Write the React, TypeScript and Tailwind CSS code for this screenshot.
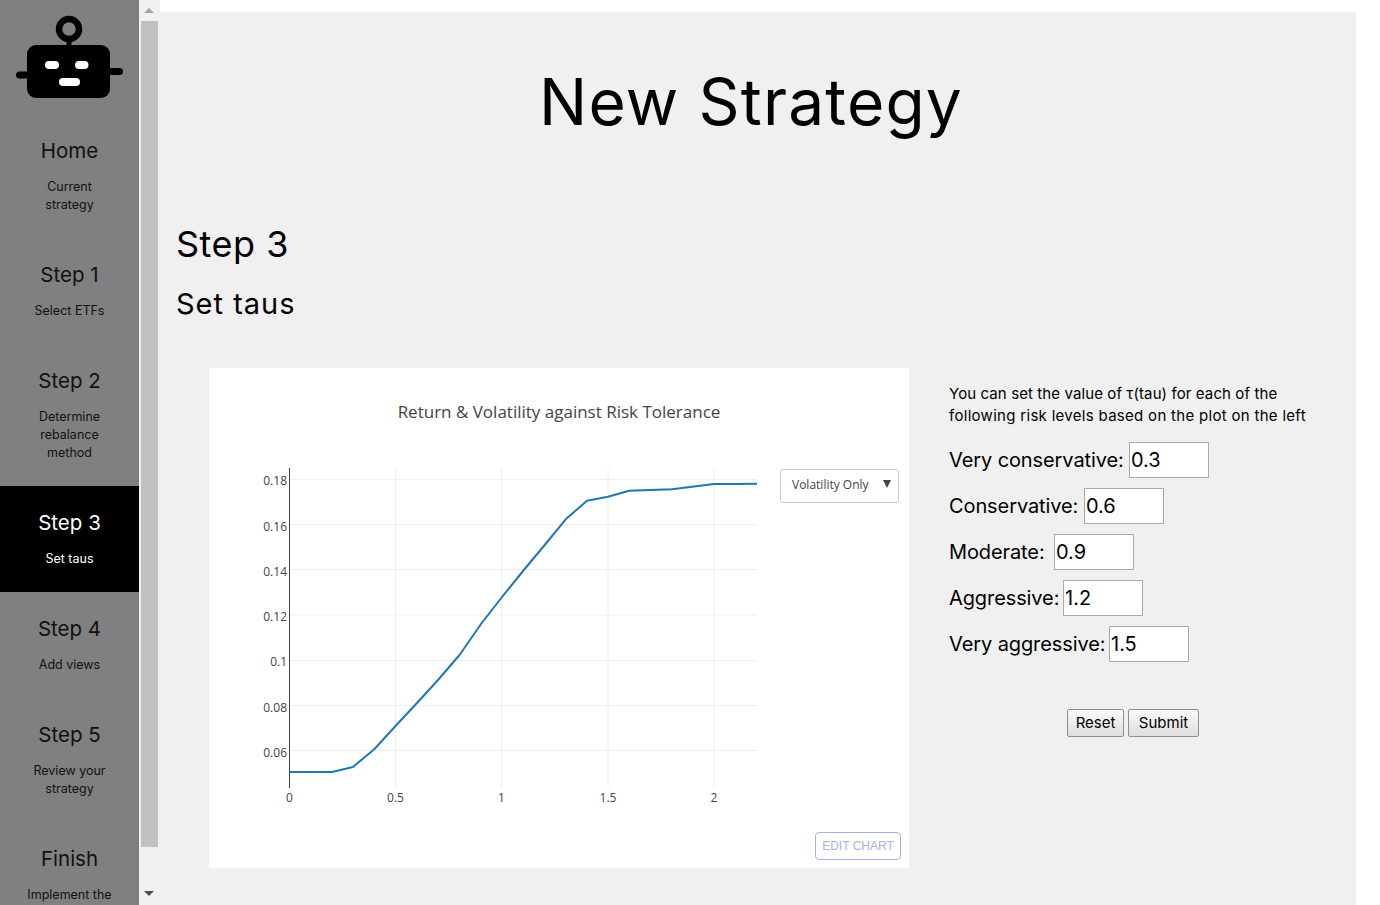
import React from "react";

const items = [
  { t: "Home", s: ["Current", "strategy"] },
  { t: "Step 1", s: ["Select ETFs"] },
  { t: "Step 2", s: ["Determine", "rebalance", "method"] },
  { t: "Step 3", s: ["Set taus"], active: true },
  { t: "Step 4", s: ["Add views"] },
  { t: "Step 5", s: ["Review your", "strategy"] },
  { t: "Finish", s: ["Implement the", "strategy"] },
];

const fields = [
  ["Very conservative:", "0.3", "w-[175px]"],
  ["Conservative:", "0.6", "w-[130px]"],
  ["Moderate:", "0.9", "w-[100px]"],
  ["Aggressive:", "1.2", "w-[109px]"],
  ["Very aggressive:", "1.5", "w-[155px]"],
];

const xTicks: [number, string][] = [
  [289.5, "0"],
  [395.5, "0.5"],
  [501.5, "1"],
  [608, "1.5"],
  [714, "2"],
];
const yTicks: [number, string, number][] = [
  [479.5, "0.18", 485],
  [524.5, "0.16", 531],
  [569.5, "0.14", 576],
  [615, "0.12", 621],
  [660.5, "0.1", 666],
  [705.5, "0.08", 712],
  [750.5, "0.06", 757],
];
const line =
  "289.5,772 332,772 353,767 374.5,749 395.5,726 417,703 438,680 459.5,655 481,624 502,597 523,571 544.7,545 565.7,519.3 587,500.7 608,496.7 629,490.7 672,489.3 714,484 735,484 757,483.7";

function Logo() {
  return (
    <svg width="139" height="114" viewBox="0 0 139 114" className="block">
      <circle cx="69" cy="29" r="10" fill="none" stroke="#000" strokeWidth="6.5" />
      <rect x="66.5" y="40" width="5" height="7" fill="#000" />
      <rect x="27" y="45" width="83" height="53" rx="9" fill="#000" />
      <rect x="16" y="71.5" width="14" height="7" rx="3.5" fill="#000" />
      <rect x="108" y="68" width="15" height="7" rx="3.5" fill="#000" />
      <rect x="45" y="61" width="14" height="8" rx="4" fill="#fff" />
      <rect x="75" y="61" width="13.5" height="8" rx="4" fill="#fff" />
      <rect x="59" y="78" width="21" height="8" rx="4" fill="#fff" />
    </svg>
  );
}

function Chart() {
  const f = { fontFamily: "'Open Sans', sans-serif" };
  return (
    <svg width="700" height="500" viewBox="209 368 700 500" className="block">
      {xTicks.slice(1).map(([x]) => (
        <line key={x} x1={x} x2={x} y1="468" y2="788" stroke="#eeeeee" />
      ))}
      {yTicks.map(([y]) => (
        <line key={y} x1="289" x2="757" y1={y} y2={y} stroke="#eeeeee" />
      ))}
      <line x1="289.5" x2="289.5" y1="468" y2="788" stroke="#444444" />
      <polyline points={line} fill="none" stroke="#1f77b4" strokeWidth="2" strokeLinejoin="round" />
      <text x="559" y="418" textAnchor="middle" fontSize="17" fill="#444444" style={f}>
        Return &amp; Volatility against Risk Tolerance
      </text>
      {xTicks.map(([x, l]) => (
        <text key={l} x={x} y="802" textAnchor="middle" fontSize="12" fill="#444444" style={f}>
          {l}
        </text>
      ))}
      {yTicks.map(([y, l, b]) => (
        <text key={l} x="287" y={b} textAnchor="end" fontSize="12" fill="#444444" style={f}>
          {l}
        </text>
      ))}
    </svg>
  );
}

export default function App() {
  return (
    <div className="flex h-[905px] w-[1380px] overflow-hidden bg-white font-['Inter',sans-serif] text-black">
      <aside className="w-[139px] shrink-0 overflow-hidden bg-[#808080]">
        <Logo />
        {items.map((it) => (
          <div
            key={it.t}
            className={`flex flex-col items-center pt-[25px] pb-[24px] text-center ${it.active ? "bg-black text-white" : "text-[#111111]"}`}
          >
            <div className="text-[20.5px] leading-[24px]">{it.t}</div>
            <div className="mt-[15px] text-[12.5px] leading-[18px]">
              {it.s.map((l) => (
                <div key={l}>{l}</div>
              ))}
            </div>
          </div>
        ))}
      </aside>

      <div className="flex w-[21px] shrink-0 flex-col items-center bg-[#f1f1f1] pr-[1px]">
        <div className="mt-[8px] h-0 w-0 border-x-[5px] border-b-[5px] border-x-transparent border-b-[#a3a3a3]" />
        <div className="mt-[8px] h-[826px] w-[17px] bg-[#c1c1c1]" />
        <div className="mt-[44px] h-0 w-0 border-x-[5px] border-t-[5px] border-x-transparent border-t-[#505050]" />
      </div>

      <div className="w-[1196px] shrink-0 pt-[12px]">
        <main className="h-[893px] overflow-hidden bg-[#f0f0f0] pt-[54px] pl-[16px]">
          <h1 className="w-[1150px] text-center text-[64px] leading-[72px] font-normal tracking-[1.2px]">
            New Strategy
          </h1>
          <h2 className="mt-[84px] text-[36px] leading-[44px] font-normal tracking-[0.5px]">Step 3</h2>
          <h3 className="mt-[20px] text-[29px] leading-[36px] font-normal tracking-[1px]">Set taus</h3>
          <div className="mt-[46px] flex pl-[33px]">
            <div className="relative h-[500px] w-[700px] shrink-0 bg-white">
              <Chart />
              <div className="absolute top-[101px] left-[571px] flex h-[34px] w-[119px] items-center justify-between rounded-[3px] border border-[#cccccc] bg-white pr-[7px] pb-[2px] pl-[11px] font-['Open_Sans',sans-serif] text-[12px] text-[#444444]">
                <span>Volatility Only</span>
                <span className="mb-[2px] h-0 w-0 border-x-[4px] border-t-[8px] border-x-transparent border-t-[#444444]" />
              </div>
              <div className="absolute top-[464px] left-[606px] flex h-[28px] w-[86px] items-center justify-center rounded-[4px] border border-[#a3b4e0] font-['Liberation_Sans',sans-serif] text-[12px] text-[#a3b4e0]">
                EDIT CHART
              </div>
            </div>
            <div className="ml-[40px] w-[368px] pt-[15px]">
              <p className="text-[15px] leading-[22px]">
                <span className="tracking-[0.1px]">You can set the value of τ(tau) for each of the</span>
                <br />
                <span className="tracking-[0.3px]">following risk levels based on the plot on the left</span>
              </p>
              <div className="mt-[15px] flex flex-col gap-[10px]">
                {fields.map(([l, v, w]) => (
                  <div key={l} className="flex h-[36px] items-center gap-[5px] text-[20px]">
                    <span className={`${w} whitespace-nowrap tracking-[-0.1px]`}>{l}</span>
                    <input
                      defaultValue={v}
                      className="h-[36px] w-[80px] border border-[#a9a9a9] bg-white px-[1px] text-[20px] outline-none"
                    />
                  </div>
                ))}
              </div>
              <div className="mt-[47px] flex justify-center gap-[4px]">
                <button className="h-[28px] w-[57px] rounded-[2px] border border-[#8f8f8f] bg-gradient-to-b from-[#fafafa] to-[#dedede] text-[15px]">
                  Reset
                </button>
                <button className="h-[28px] w-[71px] rounded-[2px] border border-[#8f8f8f] bg-gradient-to-b from-[#fafafa] to-[#dedede] text-[15px]">
                  Submit
                </button>
              </div>
            </div>
          </div>
        </main>
      </div>
    </div>
  );
}
